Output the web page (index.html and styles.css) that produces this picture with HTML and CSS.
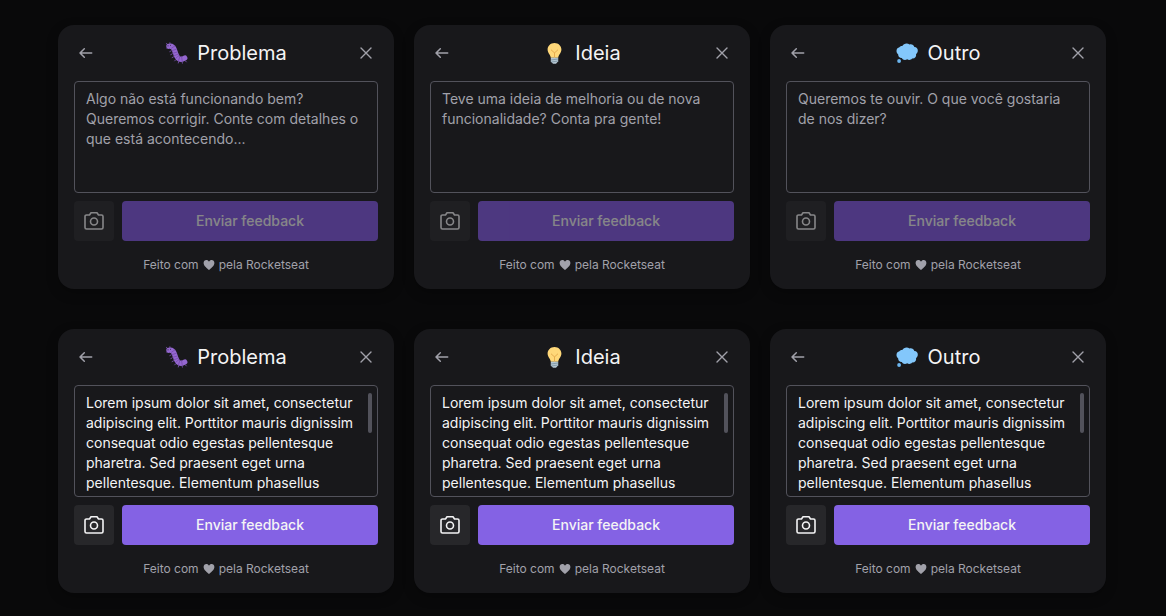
FILE: index.html
```html
<!DOCTYPE html>
<html lang="pt-BR">
<head>
<meta charset="utf-8">
<meta name="viewport" content="width=device-width, initial-scale=1">
<title>Feedback</title>
<link rel="stylesheet" href="styles.css">
</head>
<body>
<svg class="sprite" aria-hidden="true">
  <symbol id="arrow" viewBox="0 0 16 16"><path d="M13.700 8H2.300M6.300 3.700 2 8l4.300 4.300" fill="none" stroke="currentColor" stroke-width="1.500" stroke-linecap="round" stroke-linejoin="round"/></symbol>
  <symbol id="close" viewBox="0 0 16 16"><path d="m3 3 10 10M13 3 3 13" fill="none" stroke="currentColor" stroke-width="1.400" stroke-linecap="round"/></symbol>
  <symbol id="camera" viewBox="0 0 24 24"><path d="M19.500 20h-15A1.500 1.500 0 0 1 3 18.500V7.500A1.500 1.500 0 0 1 4.500 6h3L9 3.800h6L16.500 6h3A1.500 1.500 0 0 1 21 7.500v11a1.500 1.500 0 0 1-1.500 1.500Z" fill="none" stroke="currentColor" stroke-width="1.600" stroke-linejoin="round"/><circle cx="12" cy="12.500" r="3.500" fill="none" stroke="currentColor" stroke-width="1.600"/></symbol>
  <symbol id="heart" viewBox="0 0 12 12"><path d="M6 11C4.500 9.200.6 7 .6 3.900.6 2.200 1.800 1 3.300 1 4.500 1 5.500 1.700 6 2.700 6.500 1.700 7.500 1 8.700 1c1.500 0 2.700 1.200 2.700 2.900C11.400 7 7.500 9.200 6 11Z" fill="currentColor"/></symbol>
  <symbol id="bug" viewBox="0 0 24 24">
    <path d="m2.300 3.500-.8-1.200M5 3l-.1-1.300M2.400 6.500l-.8.500M6 10l-1.200.6M7 13l-1.200.6M8.300 16l-1.200.6M10.500 19l-.8.900M13.600 20.800l-.3 1.200M17.200 21l.2 1.200M20.500 20l.8.900" stroke="#7450a8" stroke-width=".9" stroke-linecap="round"/>
    <path d="M3.900 5.300c3-.5 4.700 1.100 5.700 4 1 3 1.400 5.800 3.400 7.800 1.900 1.800 4.600 1.300 6.800 0" fill="none" stroke="#9467d0" stroke-width="5.200" stroke-linecap="round"/>
    <path d="m6.500 7.200 3.300-2.200M7.100 9.600l4.300-1.400M7.800 12.200l4.300-1.100M8.800 14.900l4.200-1.700M10.400 17.600l3.400-2.900M13.500 19.600l1.400-4.100M17.200 19.800l-.6-4.200" stroke="#764aab" stroke-width=".8" stroke-linecap="round"/>
    <circle cx="3" cy="4.800" r=".6" fill="#342849"/><circle cx="5.500" cy="4.200" r=".5" fill="#342849"/>
  </symbol>
  <symbol id="bulb" viewBox="0 0 24 24">
    <path d="M11.500 1.900c-4 0-6.900 2.900-6.900 6.600 0 3.500 2.600 5 3.200 8.200h7.400c.6-3.200 3.200-4.700 3.200-8.200 0-3.700-2.900-6.600-6.900-6.600Z" fill="#ffd879"/>
    <path d="m8.300 9 3.200 2.900L14.700 9M11.500 11.900v4.800" fill="none" stroke="#e7ad4f" stroke-width="1" stroke-linecap="round" stroke-linejoin="round"/>
    <path d="M7.800 16.700h7.400v3.600L13 22.800h-3l-2.200-2.500Z" fill="#b4c6d2"/>
    <path d="m7.900 19 7.300-1M8.200 21l6.600-.9" stroke="#78909f" stroke-width=".8"/>
  </symbol>
  <symbol id="cloud" viewBox="0 0 24 24">
    <path d="M6.300 4.900C7.400 2.700 11 1.500 13.500 3.400c2.200-.6 4.400.6 4.900 2.600 2.200.1 3.700 1.800 3.400 4-.2 1.400-.8 2.300-1.700 2.900.4 3-1.400 4.900-4 4.600-1.200 1.700-3.500 1.900-4.900.7-1.900 1.300-4.600.7-5.400-1.200-2.100.1-3.700-1.400-3.600-3.500C.9 12.500.2 10.900.6 9.100c.3-1.500 1.300-2.400 2.500-2.600.5-1 1.800-1.700 3.200-1.600Z" fill="#83c7fb"/>
    <circle cx="3.100" cy="20" r="1.900" fill="#6bb4ed"/>
  </symbol>
</svg>

<main class="board">
  <form class="card">
    <header class="card-header">
      <button class="icon-button" type="button" aria-label="Voltar"><svg class="icon-small"><use href="#arrow"/></svg></button>
      <h2 class="title"><svg class="emoji" aria-hidden="true"><use href="#bug"/></svg>Problema</h2>
      <button class="icon-button" type="button" aria-label="Fechar"><svg class="icon-small"><use href="#close"/></svg></button>
    </header>
    <div class="field"><textarea class="message" aria-label="Problema" placeholder="Algo não está funcionando bem? Queremos corrigir. Conte com detalhes o que está acontecendo..."></textarea></div>
    <div class="actions">
      <button class="camera" type="button" aria-label="Capturar tela" disabled><svg class="icon"><use href="#camera"/></svg></button>
      <button class="submit" type="submit" disabled>Enviar feedback</button>
    </div>
    <footer class="credit">Feito com <svg class="heart" aria-label="amor"><use href="#heart"/></svg> pela Rocketseat</footer>
  </form>

  <form class="card">
    <header class="card-header">
      <button class="icon-button" type="button" aria-label="Voltar"><svg class="icon-small"><use href="#arrow"/></svg></button>
      <h2 class="title"><svg class="emoji" aria-hidden="true"><use href="#bulb"/></svg>Ideia</h2>
      <button class="icon-button" type="button" aria-label="Fechar"><svg class="icon-small"><use href="#close"/></svg></button>
    </header>
    <div class="field"><textarea class="message" aria-label="Ideia" placeholder="Teve uma ideia de melhoria ou de nova funcionalidade? Conta pra gente!"></textarea></div>
    <div class="actions">
      <button class="camera" type="button" aria-label="Capturar tela" disabled><svg class="icon"><use href="#camera"/></svg></button>
      <button class="submit" type="submit" disabled>Enviar feedback</button>
    </div>
    <footer class="credit">Feito com <svg class="heart" aria-label="amor"><use href="#heart"/></svg> pela Rocketseat</footer>
  </form>

  <form class="card">
    <header class="card-header">
      <button class="icon-button" type="button" aria-label="Voltar"><svg class="icon-small"><use href="#arrow"/></svg></button>
      <h2 class="title"><svg class="emoji" aria-hidden="true"><use href="#cloud"/></svg>Outro</h2>
      <button class="icon-button" type="button" aria-label="Fechar"><svg class="icon-small"><use href="#close"/></svg></button>
    </header>
    <div class="field"><textarea class="message" aria-label="Outro" placeholder="Queremos te ouvir. O que você gostaria de nos dizer?"></textarea></div>
    <div class="actions">
      <button class="camera" type="button" aria-label="Capturar tela" disabled><svg class="icon"><use href="#camera"/></svg></button>
      <button class="submit" type="submit" disabled>Enviar feedback</button>
    </div>
    <footer class="credit">Feito com <svg class="heart" aria-label="amor"><use href="#heart"/></svg> pela Rocketseat</footer>
  </form>

  <form class="card">
    <header class="card-header">
      <button class="icon-button" type="button" aria-label="Voltar"><svg class="icon-small"><use href="#arrow"/></svg></button>
      <h2 class="title"><svg class="emoji" aria-hidden="true"><use href="#bug"/></svg>Problema</h2>
      <button class="icon-button" type="button" aria-label="Fechar"><svg class="icon-small"><use href="#close"/></svg></button>
    </header>
    <div class="field"><textarea class="message" aria-label="Problema">Lorem ipsum dolor sit amet, consectetur adipiscing elit. Porttitor mauris dignissim consequat odio egestas pellentesque pharetra. Sed praesent eget urna pellentesque. Elementum phasellus</textarea><span class="thumb"></span></div>
    <div class="actions">
      <button class="camera" type="button" aria-label="Capturar tela"><svg class="icon"><use href="#camera"/></svg></button>
      <button class="submit" type="submit">Enviar feedback</button>
    </div>
    <footer class="credit">Feito com <svg class="heart" aria-label="amor"><use href="#heart"/></svg> pela Rocketseat</footer>
  </form>

  <form class="card">
    <header class="card-header">
      <button class="icon-button" type="button" aria-label="Voltar"><svg class="icon-small"><use href="#arrow"/></svg></button>
      <h2 class="title"><svg class="emoji" aria-hidden="true"><use href="#bulb"/></svg>Ideia</h2>
      <button class="icon-button" type="button" aria-label="Fechar"><svg class="icon-small"><use href="#close"/></svg></button>
    </header>
    <div class="field"><textarea class="message" aria-label="Ideia">Lorem ipsum dolor sit amet, consectetur adipiscing elit. Porttitor mauris dignissim consequat odio egestas pellentesque pharetra. Sed praesent eget urna pellentesque. Elementum phasellus</textarea><span class="thumb"></span></div>
    <div class="actions">
      <button class="camera" type="button" aria-label="Capturar tela"><svg class="icon"><use href="#camera"/></svg></button>
      <button class="submit" type="submit">Enviar feedback</button>
    </div>
    <footer class="credit">Feito com <svg class="heart" aria-label="amor"><use href="#heart"/></svg> pela Rocketseat</footer>
  </form>

  <form class="card">
    <header class="card-header">
      <button class="icon-button" type="button" aria-label="Voltar"><svg class="icon-small"><use href="#arrow"/></svg></button>
      <h2 class="title"><svg class="emoji" aria-hidden="true"><use href="#cloud"/></svg>Outro</h2>
      <button class="icon-button" type="button" aria-label="Fechar"><svg class="icon-small"><use href="#close"/></svg></button>
    </header>
    <div class="field"><textarea class="message" aria-label="Outro">Lorem ipsum dolor sit amet, consectetur adipiscing elit. Porttitor mauris dignissim consequat odio egestas pellentesque pharetra. Sed praesent eget urna pellentesque. Elementum phasellus</textarea><span class="thumb"></span></div>
    <div class="actions">
      <button class="camera" type="button" aria-label="Capturar tela"><svg class="icon"><use href="#camera"/></svg></button>
      <button class="submit" type="submit">Enviar feedback</button>
    </div>
    <footer class="credit">Feito com <svg class="heart" aria-label="amor"><use href="#heart"/></svg> pela Rocketseat</footer>
  </form>
</main>
</body>
</html>
```
FILE: styles.css
```css
* {
  box-sizing: border-box;
}

body {
  margin: 0;
  background: #09090a;
  color: #f4f4f5;
  font-family: Inter, "Liberation Sans", sans-serif;
  font-size: 14px;
  line-height: 20px;
}

.sprite {
  position: absolute;
  width: 0;
  height: 0;
}

.board {
  display: grid;
  grid-template-columns: repeat(auto-fit, minmax(300px, 1fr));
  gap: 40px 20px;
  padding: 25px 60px 23px 58px;
}

.card {
  display: flex;
  flex-direction: column;
  padding: 16px;
  border-radius: 16px;
  background: #18181b;
  box-shadow: 0 4px 12px rgba(0, 0, 0, 0.25);
}

.card-header {
  display: flex;
  align-items: center;
  justify-content: space-between;
  margin-bottom: 16px;
}

.icon-button {
  display: grid;
  place-items: center;
  width: 24px;
  height: 24px;
  padding: 0;
  border: 0;
  background: none;
  color: #a1a1aa;
}

.icon-small {
  width: 16px;
  height: 16px;
}

.title {
  display: flex;
  align-items: center;
  gap: 8px;
  margin: 0;
  font-size: 20px;
  font-weight: 400;
  line-height: 24px;
}

.emoji,
.icon {
  width: 24px;
  height: 24px;
}

.field {
  position: relative;
  display: flex;
  margin-bottom: 8px;
}

.message {
  width: 100%;
  height: 112px;
  padding: 7px 16px 7px 11px;
  border: 1px solid #52525b;
  border-radius: 4px;
  outline: 0;
  background: transparent;
  color: #f4f4f5;
  font: inherit;
  resize: none;
  scrollbar-width: none;
}

.message::placeholder {
  color: #a1a1aa;
  opacity: 1;
}

.thumb {
  position: absolute;
  top: 8px;
  right: 6px;
  width: 4px;
  height: 40px;
  border-radius: 2px;
  background: #52525b;
}

.actions {
  display: flex;
  gap: 8px;
  margin-bottom: 16px;
}

.camera,
.submit {
  height: 40px;
  padding: 0;
  border: 0;
  border-radius: 4px;
  color: #f4f4f5;
}

.camera {
  display: grid;
  place-items: center;
  width: 40px;
  background: #27272a;
}

.submit {
  flex: 1;
  background: #8462e4;
  font: inherit;
  font-weight: 500;
}

.camera:disabled,
.submit:disabled {
  opacity: 0.5;
}

.submit:disabled {
  background: #8257e5;
}

.credit {
  display: flex;
  align-items: center;
  justify-content: center;
  gap: 4px;
  color: #a1a1aa;
  font-size: 12px;
  line-height: 16px;
}

.heart {
  width: 12px;
  height: 12px;
}
```
